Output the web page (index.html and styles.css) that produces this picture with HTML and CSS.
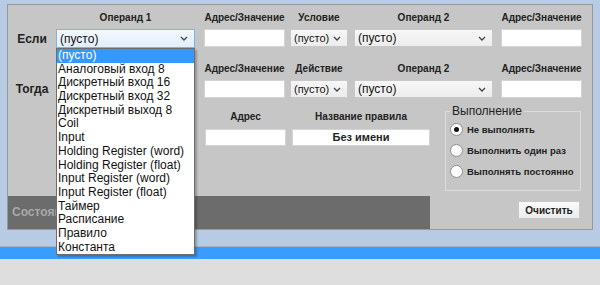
FILE: index.html
```html
<!DOCTYPE html>
<html lang="ru">

<head>
    <meta charset="UTF-8">
    <title>Правила</title>
    <link rel="stylesheet" href="styles.css">
</head>

<body>

    <div class="window">
        <div class="panel">

            <div class="rules">
                <div></div>
                <div class="head col-op">Операнд 1</div>
                <div class="head col-addr">Адрес/Значение</div>
                <div class="head col-cond">Условие</div>
                <div class="head col-op">Операнд 2</div>
                <div class="head col-addr">Адрес/Значение</div>

                <div class="row-label">Если</div>
                <div class="select col-op is-open">
                    <span>(пусто)</span>
                    <svg class="chevron" width="8" height="5" viewBox="0 0 8 5"><path d="M1 1l3 3 3-3" fill="none" stroke="#444" stroke-width="1.3"/></svg>
                    <ul class="dropdown">
                        <li class="active">(пусто)</li>
                        <li>Аналоговый вход 8</li>
                        <li>Дискретный вход 16</li>
                        <li>Дискретный вход 32</li>
                        <li>Дискретный выход 8</li>
                        <li>Coil</li>
                        <li>Input</li>
                        <li>Holding Register (word)</li>
                        <li>Holding Register (float)</li>
                        <li>Input Register (word)</li>
                        <li>Input Register (float)</li>
                        <li>Таймер</li>
                        <li>Расписание</li>
                        <li>Правило</li>
                        <li>Константа</li>
                    </ul>
                </div>
                <div class="input col-addr"></div>
                <div class="select select-sm col-cond">
                    <span>(пусто)</span>
                    <svg class="chevron" width="8" height="5" viewBox="0 0 8 5"><path d="M1 1l3 3 3-3" fill="none" stroke="#444" stroke-width="1.3"/></svg>
                </div>
                <div class="select col-op">
                    <span>(пусто)</span>
                    <svg class="chevron" width="8" height="5" viewBox="0 0 8 5"><path d="M1 1l3 3 3-3" fill="none" stroke="#444" stroke-width="1.3"/></svg>
                </div>
                <div class="input col-addr"></div>

                <div></div>
                <div></div>
                <div class="head col-addr">Адрес/Значение</div>
                <div class="head col-cond">Действие</div>
                <div class="head col-op">Операнд 2</div>
                <div class="head col-addr">Адрес/Значение</div>

                <div class="row-label">Тогда</div>
                <div></div>
                <div class="input col-addr"></div>
                <div class="select select-sm col-cond">
                    <span>(пусто)</span>
                    <svg class="chevron" width="8" height="5" viewBox="0 0 8 5"><path d="M1 1l3 3 3-3" fill="none" stroke="#444" stroke-width="1.3"/></svg>
                </div>
                <div class="select col-op">
                    <span>(пусто)</span>
                    <svg class="chevron" width="8" height="5" viewBox="0 0 8 5"><path d="M1 1l3 3 3-3" fill="none" stroke="#444" stroke-width="1.3"/></svg>
                </div>
                <div class="input col-addr"></div>
            </div>

            <div class="details">
                <div class="field col-addr">
                    <div class="head">Адрес</div>
                    <div class="input"></div>
                </div>
                <div class="field col-name">
                    <div class="head">Название правила</div>
                    <div class="input input-name">Без имени</div>
                </div>
                <fieldset class="run-mode">
                    <legend>Выполнение</legend>
                    <label class="radio"><span class="dot checked"></span>Не выполнять</label>
                    <label class="radio"><span class="dot"></span>Выполнить один раз</label>
                    <label class="radio"><span class="dot"></span>Выполнять постоянно</label>
                </fieldset>
            </div>

            <div class="footer">
                <div class="status">Состояние</div>
                <button class="btn">Очистить</button>
            </div>

        </div>
    </div>

    <div class="taskbar"></div>

</body>

</html>
```

FILE: styles.css
```css
body {
    margin: 0;
    font-family: 'Liberation Sans', Arial, sans-serif;
    font-size: 12px;
    color: #111;
    background-color: #dedede;
}

.window {
    height: 242px;
    padding: 4px 7px 0;
    background-color: #b7cbe4;
    border-bottom: 1px solid #a4b4c8;
}

.panel {
    height: 226px;
    box-sizing: border-box;
    border: 1px solid #999;
    background-color: #c6c6c6;
    display: flex;
    flex-direction: column;
    position: relative;
}

.rules {
    display: grid;
    grid-template-columns: 48px 148px 86px 64px 147px 82px;
    grid-template-rows: 22px 19px 32px 18px;
    margin-top: 2px;
}

.head {
    align-self: end;
    padding-bottom: 4px;
    font-weight: bold;
    font-size: 10px;
    line-height: 14px;
    text-align: center;
    color: #222;
    white-space: nowrap;
}

.col-op { width: 139px; }
.col-addr { width: 81px; }
.col-cond { width: 58px; }
.col-name { width: 138px; }

.row-label {
    align-self: center;
    text-align: center;
    font-weight: bold;
    font-size: 12px;
    color: #222;
}

.input {
    height: 18px;
    box-sizing: border-box;
    background-color: #fff;
    border: 1px solid #d4d4d4;
}

.select {
    height: 18px;
    box-sizing: border-box;
    border: 1px solid #c8c8c8;
    background: linear-gradient(#f7f7f7, #ececec);
    display: flex;
    align-items: center;
    justify-content: space-between;
    padding: 0 6px 0 3px;
    font-size: 12px;
    color: #111;
    position: relative;
}

.select-sm {
    font-size: 11px;
}

.is-open {
    height: 19px;
    border-color: #7fb3e8;
    background: linear-gradient(#f3f8fd, #e3eefa);
}

.dropdown {
    position: absolute;
    top: 18px;
    left: -1px;
    width: 139px;
    box-sizing: border-box;
    margin: 0;
    padding: 0;
    list-style: none;
    background-color: #fff;
    border: 1px solid #6d6d6d;
    box-shadow: 2px 2px 2px rgba(0, 0, 0, 0.25);
    z-index: 10;
}

.dropdown li {
    height: 13.7px;
    line-height: 13.7px;
    padding-left: 1px;
    white-space: nowrap;
    color: #111;
}

.dropdown .active {
    background-color: #3399ff;
    color: #fff;
}

.details {
    display: flex;
    align-items: flex-start;
    margin-top: 6px;
    padding-left: 197px;
}

.field {
    margin-right: 6px;
    padding-top: 6px;
}

.field .head {
    padding-bottom: 5px;
}

.input-name {
    height: 17px;
    text-align: center;
    font-weight: bold;
    font-size: 11px;
    line-height: 15px;
    color: #222;
}

.field .input {
    height: 17px;
}

.run-mode {
    margin: 0 0 0 9px;
    width: 136px;
    height: 87px;
    box-sizing: border-box;
    padding: 1px 4px 0;
    border: 1px solid #dcdcdc;
}

.run-mode legend {
    padding: 0 2px;
    font-size: 12px;
    line-height: 14px;
    color: #222;
}

.radio {
    display: flex;
    align-items: center;
    height: 21px;
    font-weight: bold;
    font-size: 9.5px;
    color: #222;
    white-space: nowrap;
}

.dot {
    flex: none;
    width: 11px;
    height: 11px;
    border: 1px solid #8d8d8d;
    border-radius: 50%;
    background-color: #fff;
    margin-right: 4px;
    position: relative;
}

.dot.checked::after {
    content: '';
    position: absolute;
    left: 3px;
    top: 3px;
    width: 5px;
    height: 5px;
    border-radius: 50%;
    background-color: #111;
}

.footer {
    margin-top: auto;
    display: flex;
    align-items: flex-start;
    justify-content: space-between;
    height: 33px;
}

.status {
    width: 422px;
    height: 33px;
    background-color: #6c6c6c;
    color: #a9a9a9;
    font-weight: bold;
    font-size: 12px;
    line-height: 33px;
    padding-left: 4px;
    box-sizing: border-box;
}

.btn {
    margin: 5px 12px 0 0;
    width: 62px;
    height: 18px;
    padding: 0;
    border: 1px solid #c9c9c9;
    background: linear-gradient(#fafafa, #ececec);
    font-family: 'Liberation Sans', Arial, sans-serif;
    font-weight: bold;
    font-size: 10px;
    color: #222;
    cursor: pointer;
}

.taskbar {
    height: 12px;
    background-color: #3a9cff;
}
```
